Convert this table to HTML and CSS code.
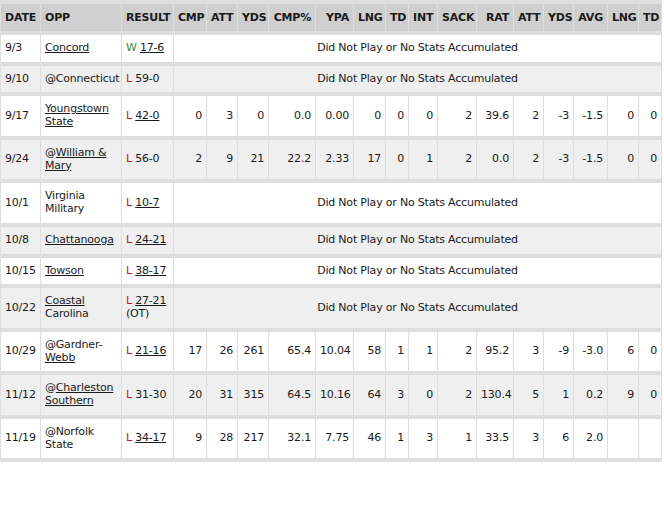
FILE: index.html
```html
<!DOCTYPE html>
<html>
<head>
<meta charset="utf-8">
<link rel="stylesheet" href="styles.css">
</head>
<body>
<table class="stats">
<colgroup>
<col class="c-date"><col class="c-opp"><col class="c-res"><col class="c-cmp"><col class="c-att"><col class="c-yds"><col class="c-pct"><col class="c-ypa"><col class="c-lng"><col class="c-td"><col class="c-int"><col class="c-sack"><col class="c-rat"><col class="c-ratt"><col class="c-ryds"><col class="c-avg"><col class="c-rlng"><col class="c-rtd">
</colgroup>
<thead>
<tr class="head">
<th class="l">DATE</th><th class="l">OPP</th><th class="l">RESULT</th><th>CMP</th><th>ATT</th><th>YDS</th><th>CMP%</th><th>YPA</th><th>LNG</th><th>TD</th><th>INT</th><th>SACK</th><th>RAT</th><th>ATT</th><th>YDS</th><th>AVG</th><th>LNG</th><th>TD</th>
</tr>
</thead>
<tbody>
<tr class="even">
<td class="l">9/3</td><td class="l"><a href="#">Concord</a></td><td class="l"><span class="w">W</span> <a href="#">17-6</a></td><td colspan="15" class="dnp">Did Not Play or No Stats Accumulated</td>
</tr>
<tr class="odd">
<td class="l">9/10</td><td class="l">@Connecticut</td><td class="l"><span class="lo">L</span> 59-0</td><td colspan="15" class="dnp">Did Not Play or No Stats Accumulated</td>
</tr>
<tr class="even">
<td class="l">9/17</td><td class="l"><a href="#">Youngstown State</a></td><td class="l"><span class="lo">L</span> <a href="#">42-0</a></td><td>0</td><td>3</td><td>0</td><td>0.0</td><td>0.00</td><td>0</td><td>0</td><td>0</td><td>2</td><td>39.6</td><td>2</td><td>-3</td><td>-1.5</td><td>0</td><td>0</td>
</tr>
<tr class="odd">
<td class="l">9/24</td><td class="l">@<a href="#">William &amp; Mary</a></td><td class="l"><span class="lo">L</span> 56-0</td><td>2</td><td>9</td><td>21</td><td>22.2</td><td>2.33</td><td>17</td><td>0</td><td>1</td><td>2</td><td>0.0</td><td>2</td><td>-3</td><td>-1.5</td><td>0</td><td>0</td>
</tr>
<tr class="even">
<td class="l">10/1</td><td class="l">Virginia Military</td><td class="l"><span class="lo">L</span> <a href="#">10-7</a></td><td colspan="15" class="dnp">Did Not Play or No Stats Accumulated</td>
</tr>
<tr class="odd">
<td class="l">10/8</td><td class="l"><a href="#">Chattanooga</a></td><td class="l"><span class="lo">L</span> <a href="#">24-21</a></td><td colspan="15" class="dnp">Did Not Play or No Stats Accumulated</td>
</tr>
<tr class="even">
<td class="l">10/15</td><td class="l"><a href="#">Towson</a></td><td class="l"><span class="lo">L</span> <a href="#">38-17</a></td><td colspan="15" class="dnp">Did Not Play or No Stats Accumulated</td>
</tr>
<tr class="odd">
<td class="l">10/22</td><td class="l"><a href="#">Coastal</a> Carolina</td><td class="l"><span class="lo">L</span> <a href="#">27-21</a> (OT)</td><td colspan="15" class="dnp">Did Not Play or No Stats Accumulated</td>
</tr>
<tr class="even">
<td class="l">10/29</td><td class="l">@Gardner- <a href="#">Webb</a></td><td class="l"><span class="lo">L</span> <a href="#">21-16</a></td><td>17</td><td>26</td><td>261</td><td>65.4</td><td>10.04</td><td>58</td><td>1</td><td>1</td><td>2</td><td>95.2</td><td>3</td><td>-9</td><td>-3.0</td><td>6</td><td>0</td>
</tr>
<tr class="odd">
<td class="l">11/12</td><td class="l">@<a href="#">Charleston Southern</a></td><td class="l"><span class="lo">L</span> 31-30</td><td>20</td><td>31</td><td>315</td><td>64.5</td><td>10.16</td><td>64</td><td>3</td><td>0</td><td>2</td><td>130.4</td><td>5</td><td>1</td><td>0.2</td><td>9</td><td>0</td>
</tr>
<tr class="even">
<td class="l">11/19</td><td class="l">@Norfolk State</td><td class="l"><span class="lo">L</span> <a href="#">34-17</a></td><td>9</td><td>28</td><td>217</td><td>32.1</td><td>7.75</td><td>46</td><td>1</td><td>3</td><td>1</td><td>33.5</td><td>3</td><td>6</td><td>2.0</td><td></td><td></td>
</tr>
</tbody>
</table>
</body>
</html>
```

FILE: styles.css
```css
html, body {
  margin: 0;
  padding: 0;
  background: #ffffff;
}

.stats {
  table-layout: fixed;
  width: 662px;
  border-collapse: separate;
  border-spacing: 1px 4px;
  background: #dedede;
  font-family: "DejaVu Sans", Verdana, sans-serif;
  font-size: 11px;
  line-height: 12.75px;
  letter-spacing: -0.2px;
  color: #1a1a1a;
}

.c-date { width: 39px; }
.c-opp { width: 80px; }
.c-res { width: 51px; }
.c-cmp { width: 32px; }
.c-att { width: 30px; }
.c-yds { width: 30px; }
.c-pct { width: 46px; }
.c-ypa { width: 37px; }
.c-lng { width: 31px; }
.c-td { width: 22px; }
.c-int { width: 28px; }
.c-sack { width: 38px; }
.c-rat { width: 36px; }
.c-ratt { width: 29px; }
.c-ryds { width: 29px; }
.c-avg { width: 33px; }
.c-rlng { width: 30px; }
.c-rtd { width: 22px; }

.stats th,
.stats td {
  padding: 7px 4px;
  text-align: right;
  vertical-align: middle;
  overflow: hidden;
  white-space: nowrap;
}

.stats th {
  background: #cfcfcf;
  font-weight: bold;
  color: #1a1a1a;
  padding: 8px 4px 6px;
}

.stats .l {
  text-align: left;
  white-space: normal;
}

.stats .dnp {
  text-align: center;
}

.even td { background: #ffffff; }
.odd td { background: #efefef; }

.stats a {
  color: #1a1a1a;
  text-decoration: underline;
}

.w { color: #3a8a3a; }
.lo { color: #c01818; }
```
